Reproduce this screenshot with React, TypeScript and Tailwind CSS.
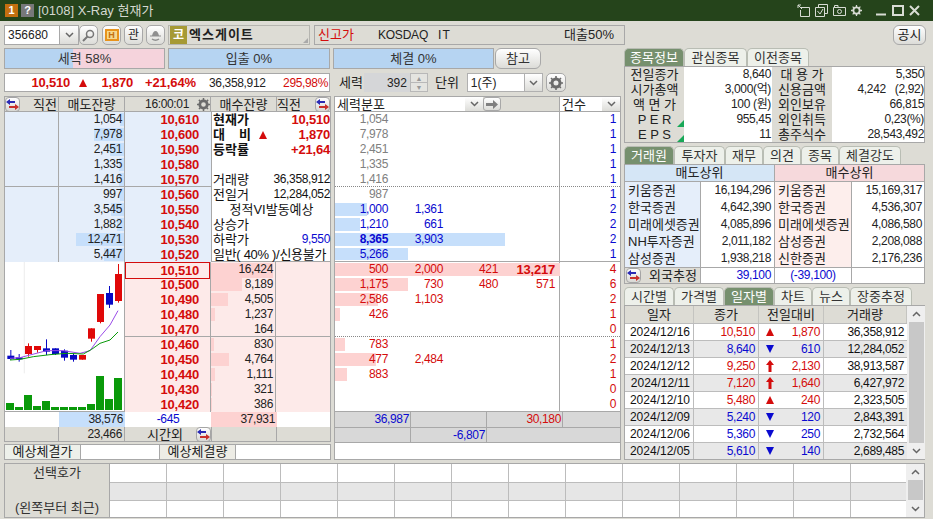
import { ReactNode } from "react";

const RED = "text-[#d40c0c]";
const BLUE = "text-[#0a0ad0]";
const ko = "text-[13px] leading-[15px]";
const num = "text-[12px] leading-[15px] tracking-[-0.35px]";
const bold = "text-[13px] leading-[15px] font-bold tracking-[-0.2px]";

const asks = [
  ["1,054", "10,610", 4],
  ["7,978", "10,600", 30],
  ["2,451", "10,590", 14],
  ["1,335", "10,580", 5],
  ["1,416", "10,570", 5],
  ["997", "10,560", 4],
  ["3,545", "10,550", 13],
  ["1,882", "10,540", 7],
  ["12,471", "10,530", 48],
  ["5,447", "10,520", 20],
] as const;

const bids = [
  ["10,510", "16,424", 62],
  ["10,500", "8,189", 31],
  ["10,490", "4,505", 17],
  ["10,480", "1,237", 4],
  ["10,470", "164", 0],
  ["10,460", "830", 3],
  ["10,450", "4,764", 18],
  ["10,440", "1,111", 4],
  ["10,430", "321", 1],
  ["10,420", "386", 1],
] as const;

const dist = [
  ["1,054", "", "", "", 0, "1", ""],
  ["7,978", "", "", "", 0, "1", ""],
  ["2,451", "", "", "", 0, "1", ""],
  ["1,335", "", "", "", 0, "1", ""],
  ["1,416", "", "", "", 0, "1", ""],
  ["987", "", "", "", 0, "1", ""],
  ["1,000", "1,361", "", "", 32, "2", ""],
  ["1,210", "661", "", "", 25, "2", ""],
  ["8,365", "3,903", "", "", 170, "2", "b"],
  ["5,266", "", "", "", 73, "1", ""],
  ["500", "2,000", "421", "13,217", 225, "4", ""],
  ["1,175", "730", "480", "571", 73, "6", ""],
  ["2,586", "1,103", "", "", 43, "2", ""],
  ["426", "", "", "", 5, "1", ""],
  ["", "", "", "", 0, "0", ""],
  ["783", "", "", "", 10, "1", ""],
  ["477", "2,484", "", "", 41, "2", ""],
  ["883", "", "", "", 12, "1", ""],
  ["", "", "", "", 0, "0", ""],
  ["", "", "", "", 0, "0", ""],
] as const;

const candles = [
  [32, 287, 297, 270, 300, 0],
  [57, 292, 298, 282, 305, 0],
  [85, 258, 282, 250, 290, 1],
  [112, 258, 270, 258, 278, 1],
  [139, 265, 275, 238, 285, 0],
  [166, 265, 282, 265, 285, 0],
  [193, 272, 293, 268, 302, 0],
  [220, 285, 299, 280, 305, 0],
  [247, 285, 299, 285, 299, 1],
  [274, 205, 236, 205, 245, 1],
  [301, 102, 186, 102, 190, 1],
  [328, 99, 134, 78, 144, 0],
  [355, 42, 123, 12, 128, 1],
];
const volumes = [429, 441, 405, 438, 423, 441, 441, 441, 441, 432, 348, 417, 354];

const daily = [
  ["2024/12/16", "10,510", "u", "1,870", "36,358,912"],
  ["2024/12/13", "8,640", "d", "610", "12,284,052"],
  ["2024/12/12", "9,250", "U", "2,130", "38,913,587"],
  ["2024/12/11", "7,120", "U", "1,640", "6,427,972"],
  ["2024/12/10", "5,480", "u", "240", "2,323,505"],
  ["2024/12/09", "5,240", "d", "120", "2,843,391"],
  ["2024/12/06", "5,360", "d", "250", "2,732,564"],
  ["2024/12/05", "5,610", "d", "140", "2,689,485"],
];

const brokers = [
  ["키움증권", "16,194,296", "키움증권", "15,169,317"],
  ["한국증권", "4,642,390", "한국증권", "4,536,307"],
  ["미래에셋증권", "4,085,896", "미래에셋증권", "4,086,580"],
  ["NH투자증권", "2,011,182", "삼성증권", "2,208,088"],
  ["삼성증권", "1,938,218", "신한증권", "2,176,236"],
];

const infoRows = [
  ["전일종가", "8,640", "대 용 가", "5,350"],
  ["시가총액", "3,000(억)", "신용금액", "4,242   (2,92)"],
  ["액 면 가", "100 (원)", "외인보유", "66,815"],
  ["P E R", "955,45", "외인취득", "0,23(%)"],
  ["E P S", "11", "총주식수", "28,543,492"],
];

function Swap() {
  return (
    <span className="flex h-[15px] w-[15px] shrink-0 items-center justify-center rounded-[4px] border border-[#a5a5a5] bg-gradient-to-b from-white to-[#d8d8d4]">
      <svg width="13" height="11" viewBox="0 0 13 11">
        <path d="M0 3 L4 0 V2 H9 V4 H4 V6 Z" fill="#2a2ab4" />
        <path d="M13 8 L9 5 V7 H3 V9 H9 V11 Z" fill="#c8302c" />
      </svg>
    </span>
  );
}

function Caret() {
  return (
    <svg width="9" height="6" viewBox="0 0 9 6">
      <path d="M1 1 L4.5 4.5 L8 1" fill="none" stroke="#666" strokeWidth="1.5" />
    </svg>
  );
}

function Gear({ size = 14 }: { size?: number }) {
  return (
    <svg width={size} height={size} viewBox="0 0 14 14">
      <circle cx="7" cy="7" r="4" fill="none" stroke="#6b6b6b" strokeWidth="3" />
      <path d="M7 0 V14 M0 7 H14 M2 2 L12 12 M12 2 L2 12" stroke="#6b6b6b" strokeWidth="1.6" strokeDasharray="2.4 9.2" />
    </svg>
  );
}

function Bevel({ className = "", children }: { className?: string; children?: ReactNode }) {
  return (
    <div className={`flex items-center justify-center rounded-[5px] border border-[#a8a8a8] bg-gradient-to-b from-white to-[#dcdcd8] ${className}`}>
      {children}
    </div>
  );
}

function Tab({ label, width, active }: { label: string; width: number; active?: boolean }) {
  return (
    <div
      style={{ width }}
      className={`flex h-[18px] items-center justify-center rounded-t-[5px] border border-b-0 border-[#b9bdb4] ${ko} ${
        active ? "bg-[#76906e] text-white" : "bg-[#edf0ea] text-[#333]"
      }`}
    >
      {label}
    </div>
  );
}

function TrendIcon({ kind }: { kind: string }) {
  if (kind === "d")
    return (
      <svg width="8" height="8" viewBox="0 0 8 8">
        <path d="M0 0 H8 L4 8 Z" fill="#0a0ad0" />
      </svg>
    );
  if (kind === "U")
    return (
      <svg width="8" height="12" viewBox="0 0 8 12">
        <path d="M4 0 L8 5 H5.5 V12 H2.5 V5 H0 Z" fill="#d40c0c" />
      </svg>
    );
  return (
    <svg width="8" height="8" viewBox="0 0 8 8">
      <path d="M4 0 L8 8 H0 Z" fill="#d40c0c" />
    </svg>
  );
}

function TitleBar() {
  return (
    <div className="flex h-[21px] shrink-0 items-center bg-[#25441b] pl-[5px] pr-[13px]">
      <span className="flex h-[13px] w-[13px] items-center justify-center bg-[#c46f10] text-[11px] font-bold text-white">1</span>
      <span className="ml-[3px] flex h-[13px] w-[13px] items-center justify-center bg-[#77787a] text-[11px] font-bold text-white">?</span>
      <span className="ml-[4px] text-[13px] text-[#d4d8d0]">[0108] X-Ray 현재가</span>
      <div className="ml-auto flex items-center gap-[5px]">
        <svg width="13" height="13" viewBox="0 0 13 13" fill="none" stroke="#d8dcd4">
          <path d="M3.5 3.5 H12.5 V12.5 H3.5 V6 M1 1 L5 5 M1 1 H4 M1 1 V4" />
        </svg>
        <svg width="13" height="13" viewBox="0 0 13 13" fill="none" stroke="#d8dcd4">
          <path d="M3.5 3 V0.5 H12.5 V9.5 H10 M0.5 3.5 H9.5 V12.5 H0.5 Z M2.5 7 L5 10 L8 5" />
        </svg>
        <svg width="13" height="13" viewBox="0 0 13 13" fill="none" stroke="#d8dcd4">
          <path d="M0.5 3.5 H12.5 V11.5 H0.5 Z M1.5 3.5 V1.5 H5 V3.5" />
          <circle cx="6.5" cy="7.5" r="2" />
        </svg>
        <svg width="11" height="11" viewBox="0 0 14 14">
          <circle cx="7" cy="7" r="4" fill="none" stroke="#d8dcd4" strokeWidth="2.4" />
          <path d="M7 0 V14 M0 7 H14 M2 2 L12 12 M12 2 L2 12" stroke="#d8dcd4" strokeWidth="1.6" strokeDasharray="2.4 9.2" />
        </svg>
        <svg className="ml-[9px]" width="11" height="11" viewBox="0 0 11 11">
          <path d="M0 9.5 H10" stroke="#d8dcd4" strokeWidth="2" />
        </svg>
        <svg width="12" height="11" viewBox="0 0 12 11" fill="none" stroke="#d8dcd4" strokeWidth="2">
          <path d="M1 1 H11 V10 H1 Z" />
        </svg>
        <svg width="11" height="11" viewBox="0 0 11 11" stroke="#d8dcd4" strokeWidth="2">
          <path d="M1 1 L10 10 M10 1 L1 10" />
        </svg>
      </div>
    </div>
  );
}

function Toolbar() {
  return (
    <div className="flex h-[20px] items-stretch">
      <div className="flex w-[56px] items-center border border-[#a8a8a8] bg-white pl-[3px] text-[12px]">356680</div>
      <div className="flex w-[19px] items-center justify-center border-y border-r border-[#a8a8a8] bg-gradient-to-b from-white to-[#dcdcd8]">
        <Caret />
      </div>
      <Bevel className="w-[19px]">
        <svg width="13" height="13" viewBox="0 0 13 13" fill="none" stroke="#777" strokeWidth="1.5">
          <circle cx="8" cy="5" r="3.5" />
          <path d="M5.5 7.5 L1 12" strokeWidth="2" />
        </svg>
      </Bevel>
      <Bevel className="ml-[4px] w-[19px]">
        <span className="flex h-[12px] w-[14px] items-center justify-center border-2 border-[#e8931c] bg-[#f6d88e] text-[9px] leading-none font-bold text-[#c46f10]">H</span>
      </Bevel>
      <Bevel className="ml-[3px] w-[19px] text-[12px]">관</Bevel>
      <Bevel className="ml-[3px] w-[19px]">
        <svg width="13" height="13" viewBox="0 0 13 13">
          <path d="M3 7 Q4 2 6.5 2 Q9 2 10 7 Z" fill="#8f8f8f" />
          <path d="M1 7 H12" stroke="#8f8f8f" />
          <path d="M3 10 Q6.5 12.5 10 10" fill="none" stroke="#8f8f8f" strokeWidth="1.5" />
        </svg>
      </Bevel>
      <div className="relative ml-[3px] flex w-[142px] items-center border border-[#b5b5b0] pl-[1px]">
        <span className="flex h-[18px] w-[17px] items-center justify-center bg-[#a69a35] text-[12px] font-bold text-white">코</span>
        <span className="ml-[2px] text-[13px] font-bold tracking-[1px]">엑스게이트</span>
        <svg className="absolute right-[1px] bottom-[1px]" width="5" height="5" viewBox="0 0 5 5">
          <path d="M5 0 V5 H0 Z" fill="#aaa" />
        </svg>
      </div>
      <div className="ml-[4px] flex w-[311px] items-center border border-[#a8a8a8] pl-[3px] pr-[10px] text-[13px]">
        <span className={RED}>신고가</span>
        <span className="ml-[24px] text-[12px] tracking-[-0.2px]">KOSDAQ</span>
        <span className="ml-[10px] text-[12px] tracking-[1px]">IT</span>
        <span className="ml-auto">대출50%</span>
      </div>
      <Bevel className="ml-[268px] w-[33px] rounded-[6px] text-[13px]">공시</Bevel>
    </div>
  );
}

function PowerBars() {
  return (
    <div className="mt-[3px] flex h-[21px] items-stretch text-[13px] text-[#333]">
      <div className="relative flex w-[161px] items-center justify-center border border-[#a8a8a8] bg-[#f5d3dc]">
        <div className="absolute inset-y-0 left-0 w-[68px] bg-[#b6d4f2]" />
        <span className="relative">세력 58%</span>
      </div>
      <div className="ml-[3px] flex w-[162px] items-center justify-center border border-[#a8a8a8] bg-[#b6d4f2]">입출 0%</div>
      <div className="ml-[3px] flex w-[161px] items-center justify-center border border-[#a8a8a8] bg-[#b6d4f2]">체결 0%</div>
      <Bevel className="ml-[1px] w-[46px] rounded-[6px] text-[13px]">참고</Bevel>
    </div>
  );
}

function QuoteLine() {
  return (
    <div className="mt-[4px] flex h-[19px] items-center whitespace-nowrap">
      <div className="flex h-full w-[326px] shrink-0 items-center border border-[#a8a8a8] bg-white pr-[1px]">
        <span className={`ml-[26px] w-[39px] text-right text-[13px] font-bold tracking-[-0.2px] ${RED}`}>10,510</span>
        <span className="ml-[9px]">
          <TrendIcon kind="u" />
        </span>
        <span className={`ml-[14px] w-[32px] text-right text-[13px] font-bold tracking-[-0.2px] ${RED}`}>1,870</span>
        <span className={`ml-[12px] text-[13px] font-bold tracking-[-0.1px] ${RED}`}>+21,64%</span>
        <span className="ml-[13px] text-[12px] tracking-[-0.35px]">36,358,912</span>
        <span className={`ml-auto text-[12px] tracking-[-0.35px] ${RED}`}>295,98%</span>
      </div>
      <span className="ml-[9px] shrink-0 text-[13px]">세력</span>
      <div className="ml-[1px] flex h-full w-[64px] shrink-0 items-stretch">
        <div className="flex w-[46px] items-center justify-end bg-[#d5d6d8] pr-[3px] text-[12px]">392</div>
        <div className="flex w-[18px] flex-col border border-[#b8b8b8] bg-[#e4e4e0]">
          <span className="flex h-[8px] flex-1 items-center justify-center overflow-hidden text-[7px] leading-none text-[#999]">▲</span>
          <span className="flex h-[8px] flex-1 items-center justify-center overflow-hidden border-t border-[#b8b8b8] text-[7px] leading-none text-[#999]">▼</span>
        </div>
      </div>
      <span className="ml-[7px] shrink-0 text-[13px]">단위</span>
      <div className="ml-[8px] flex h-full w-[76px] shrink-0 items-stretch border border-[#b0b0b0] bg-white">
        <span className="flex flex-1 items-center pl-[3px] text-[12px]">1(주)</span>
        <span className="flex w-[18px] items-center justify-center border-l border-[#b0b0b0] bg-gradient-to-b from-white to-[#dcdcd8]">
          <Caret />
        </span>
      </div>
      <Bevel className="ml-[3px] h-full w-[20px] shrink-0">
        <Gear />
      </Bevel>
    </div>
  );
}

function LeftTable() {
  const head = `flex h-[15px] items-center justify-center whitespace-nowrap border-b border-r border-[#a8a8a8] bg-[#dddcd5] ${ko}`;
  return (
    <div className="w-[327px] border-x border-t border-[#a8a8a8] bg-white">
      <div className="grid grid-cols-[54px_66px_86px_66px_53px]">
        <div className={`${head} justify-start gap-[13px]`}>
          <Swap />
          <span>직전</span>
        </div>
        <div className={head}>매도잔량</div>
        <div className={`${head} justify-end gap-[8px]`}>
          <span className={num}>16:00:01</span>
          <Gear size={13} />
        </div>
        <div className={head}>매수잔량</div>
        <div className={`${head} justify-end gap-[14px] border-r-0`}>
          <span>직전</span>
          <Swap />
        </div>
      </div>
      <div className="flex h-[150px] border-b border-[#a8a8a8]">
        <div className="w-[206px] shrink-0">
          {asks.map(([qty, price, bar], i) => (
            <div key={price} className={`grid h-[15px] grid-cols-[54px_66px_86px] bg-[#e5eefa] ${i === 4 ? "border-b border-[#a8a8a8]" : ""}`}>
              <div className="border-r border-[#a8a8a8]" />
              <div className={`relative border-r border-[#a8a8a8] pr-[2px] text-right ${num} text-[#222]`}>
                <div className="absolute inset-y-[1px] right-0 bg-[#c6dffb]" style={{ width: bar }} />
                <span className="relative">{qty}</span>
              </div>
              <div className={`pr-[12px] text-right ${bold} ${RED}`}>{price}</div>
            </div>
          ))}
        </div>
        <div className={`flex-1 border-l border-[#a8a8a8] pl-[1px] ${num} text-[#111]`}>
          <div className="flex h-[15px] justify-between">
            <span className="text-[13px] font-bold tracking-normal">현재가</span>
            <span className={`${bold} ${RED}`}>10,510</span>
          </div>
          <div className="flex h-[15px] items-center">
            <span className="flex w-[38px] justify-between text-[13px] font-bold tracking-normal">
              <span>대</span>
              <span>비</span>
            </span>
            <span className="ml-[8px]">
              <TrendIcon kind="u" />
            </span>
            <span className={`ml-auto ${bold} ${RED}`}>1,870</span>
          </div>
          <div className="flex h-[15px] justify-between">
            <span className="text-[13px] font-bold tracking-normal">등락률</span>
            <span className={`${bold} ${RED}`}>+21,64</span>
          </div>
          <div className="h-[15px]" />
          <div className="flex h-[15px] justify-between">
            <span className="text-[13px] tracking-normal">거래량</span>
            <span>36,358,912</span>
          </div>
          <div className="flex h-[15px] justify-between">
            <span className="text-[13px] tracking-normal">전일거</span>
            <span>12,284,052</span>
          </div>
          <div className="h-[15px] text-center text-[13px] tracking-normal">정적VI발동예상</div>
          <div className="h-[15px] text-[13px] tracking-normal">상승가</div>
          <div className="flex h-[15px] justify-between">
            <span className="text-[13px] tracking-normal">하락가</span>
            <span className={BLUE}>9,550</span>
          </div>
          <div className="h-[15px] whitespace-nowrap text-[13px] tracking-[-0.3px]">일반( 40% )/신용불가</div>
        </div>
      </div>
      <div className="flex h-[150px] border-b border-[#a8a8a8]">
        <div className="h-full w-[120px] shrink-0 border-r border-[#a8a8a8] bg-white">
          <svg width="119" height="149" viewBox="15 6 357 447">
            <path d="M73 6 V340" stroke="#e4e4e4" strokeWidth="2" />
            {volumes.map((top, i) => (
              <rect key={i} x={18 + i * 27} y={top} width="24" height={450 - top} fill="#0a9a0a" />
            ))}
            {candles.map(([x, t, b, wt, wb, up], i) => (
              <g key={i} fill={up ? "#e00808" : "#0808c4"}>
                <rect x={x - 1} y={wt} width="3" height={wb - wt} />
                <rect x={x - 10} y={t} width="21" height={b - t} />
              </g>
            ))}
            <polyline points="30,295 60,293 90,285 140,272 190,272 240,280 270,272 300,230 330,195 354,152" fill="none" stroke="#9a4be8" strokeWidth="3" />
            <polyline points="30,300 60,298 100,290 150,284 200,280 250,282 275,268 300,250 330,240 354,216" fill="none" stroke="#0a9a0a" strokeWidth="3" />
          </svg>
        </div>
        <div className="flex-1">
          {bids.map(([price, qty, bar], i) => (
            <div key={price} className={`grid h-[15px] grid-cols-[85px_66px_1fr] bg-[#fdeae9] ${i === 4 ? "border-b border-[#a8a8a8]" : ""}`}>
              <div className={`text-right ${bold} ${RED} ${i === 0 ? "border border-[#d40c0c] pr-[10px] leading-[13px]" : "pr-[11px]"}`}>{price}</div>
              <div className={`relative border-x border-[#a8a8a8] pr-[2px] text-right ${num} text-[#222]`}>
                <div className="absolute inset-y-[1px] left-0 bg-[#fdd2d1]" style={{ width: bar }} />
                <span className="relative">{qty}</span>
              </div>
              <div />
            </div>
          ))}
        </div>
      </div>
      <div className={`grid h-[15px] grid-cols-[54px_66px_86px_66px_53px] ${num}`}>
        <div />
        <div className="bg-[#c6dffb] pr-[2px] text-right">38,576</div>
        <div className={`text-center ${BLUE}`}>-645</div>
        <div className="bg-[#fdd2d1] pr-[2px] text-right">37,931</div>
        <div />
      </div>
      <div className={`grid h-[15px] grid-cols-[54px_66px_86px_66px_53px] border-b border-[#a8a8a8] bg-[#dddcd5] ${num}`}>
        <div className="border-r border-[#a8a8a8]" />
        <div className="border-r border-[#a8a8a8] pr-[2px] text-right">23,466</div>
        <div className="flex items-center justify-end gap-[13px]">
          <span className="text-[13px] tracking-normal">시간외</span>
          <Swap />
        </div>
        <div className="border-x border-[#a8a8a8]" />
        <div />
      </div>
    </div>
  );
}

function MiddleTable() {
  return (
    <div className="flex w-[287px] flex-col border border-[#a8a8a8] bg-white">
      <div className={`flex h-[15px] border-b border-[#a8a8a8] ${ko}`}>
        <div className="flex w-[225px] items-stretch border-r border-[#a8a8a8] bg-[#dddcd5]">
          <span className="w-[130px] bg-white pl-[2px] text-[13px]">세력분포</span>
          <span className="flex w-[18px] items-center justify-center bg-gradient-to-b from-white to-[#dcdcd8]">
            <Caret />
          </span>
          <span className="flex w-[18px] items-center justify-center rounded-[3px] border border-[#a8a8a8] bg-gradient-to-b from-white to-[#dcdcd8]">
            <svg width="12" height="9" viewBox="0 0 12 9">
              <path d="M0 3 H7 V0 L12 4.5 L7 9 V6 H0 Z" fill="#808080" />
            </svg>
          </span>
        </div>
        <div className="flex flex-1 items-stretch">
          <span className="flex-1 bg-white pl-[2px]">건수</span>
          <span className="flex w-[18px] items-center justify-center bg-gradient-to-b from-white to-[#dcdcd8]">
            <Caret />
          </span>
        </div>
      </div>
      {dist.map(([a, b, c, d, bar, cnt, bf], i) => {
        const color = i < 6 ? "text-[#808080]" : i < 10 ? BLUE : RED;
        const barColor = i < 10 ? "bg-[#c6dffb]" : "bg-[#fdd2d1]";
        const countColor = i < 10 ? BLUE : RED;
        const edge = i === 4 || i === 14 ? "border-b border-dotted border-[#888]" : i === 9 || i === 19 ? "border-b border-[#a8a8a8]" : "";
        return (
          <div key={i} className={`flex h-[15px] ${edge} ${num}`}>
            <div className={`relative grid w-[225px] grid-cols-[53px_55px_55px_57px_5px] border-r border-[#a8a8a8] text-right ${color}`}>
              <div className={`absolute inset-y-[1px] left-0 ${barColor}`} style={{ width: bar }} />
              <span className={`relative ${bf ? "font-bold" : ""}`}>{a}</span>
              <span className="relative">{b}</span>
              <span className="relative">{c}</span>
              <span className={`relative ${i === 10 ? bold : ""}`}>{d}</span>
            </div>
            <div className={`flex-1 pr-[4px] text-right ${countColor}`}>{cnt}</div>
          </div>
        );
      })}
      <div className={`flex h-[15px] bg-[#d8d8d8] ${num}`}>
        <div className={`w-[76px] border-r border-[#a8a8a8] pr-[1px] text-right ${BLUE}`}>36,987</div>
        <div className="w-[76px] border-r border-[#a8a8a8]" />
        <div className={`w-[76px] border-r border-[#a8a8a8] pr-[1px] text-right ${RED}`}>30,180</div>
      </div>
      <div className={`flex h-[15px] border-t border-[#a8a8a8] bg-[#d8d8d8] ${num}`}>
        <div className="w-[76px] border-r border-[#a8a8a8]" />
        <div className={`w-[76px] border-r border-[#a8a8a8] pr-[1px] text-right ${BLUE}`}>-6,807</div>
      </div>
      <div className="flex-1 border-t border-[#a8a8a8]" />
    </div>
  );
}

function InfoPanel() {
  return (
    <div className={`border border-[#a8a8a8] ${num}`}>
      {infoRows.map(([l1, v1, l2, v2], i) => (
        <div key={l1} className="grid h-[15px] grid-cols-[59px_88px_60px_92px] text-[#222]">
          <div className="relative whitespace-pre text-center text-[13px] tracking-normal">
            {l1}
            {i > 2 && (
              <svg className="absolute right-0 bottom-0" width="7" height="7" viewBox="0 0 7 7">
                <path d="M7 0 V7 H0 Z" fill="#18a858" />
              </svg>
            )}
          </div>
          <div className="whitespace-pre bg-white pr-[1px] text-right">{v1}</div>
          <div className="whitespace-pre text-center text-[13px] tracking-normal">{l2}</div>
          <div className="whitespace-pre bg-white text-right">{v2}</div>
        </div>
      ))}
    </div>
  );
}

function BrokerPanel() {
  const row = "grid h-[17px] grid-cols-[76px_74px_77px_73px] leading-[17px]";
  return (
    <div className="border border-[#a8a8a8] bg-white text-[#222]">
      <div className="grid h-[17px] grid-cols-[150px_1fr] border-b border-[#a8a8a8] text-center text-[13px] leading-[16px]">
        <div className="border-r border-[#a8a8a8] bg-[#d5e6f6]">매도상위</div>
        <div className="bg-[#f6d9dc]">매수상위</div>
      </div>
      {brokers.map(([a, b, c, d]) => (
        <div key={a + c} className={row}>
          <div className="whitespace-nowrap border-r border-[#a8a8a8] bg-[#e5eefa] pl-[3px] text-[13px]">{a}</div>
          <div className="border-r border-[#a8a8a8] pr-[3px] text-right text-[12px] tracking-[-0.35px]">{b}</div>
          <div className="whitespace-nowrap border-r border-[#a8a8a8] bg-[#fdeeec] pl-[3px] text-[13px]">{c}</div>
          <div className="pr-[3px] text-right text-[12px] tracking-[-0.35px]">{d}</div>
        </div>
      ))}
      <div className="grid h-[16px] grid-cols-[76px_74px_77px_73px] border-t border-[#a8a8a8] leading-[15px]">
        <div className="flex items-center gap-[8px] border-r border-[#a8a8a8] bg-[#dddcd5] pl-[1px] text-[13px]">
          <Swap />
          외국추정
        </div>
        <div className={`border-r border-[#a8a8a8] pr-[3px] text-right text-[12px] tracking-[-0.35px] ${BLUE}`}>39,100</div>
        <div className={`border-r border-[#a8a8a8] text-center text-[12px] tracking-[-0.35px] ${BLUE}`}>(-39,100)</div>
        <div />
      </div>
    </div>
  );
}

function ScrollBar({ thumb }: { thumb: string }) {
  return (
    <div className="flex w-[18px] shrink-0 flex-col items-center bg-[#efefef]">
      <span className="flex h-[16px] items-center justify-center">
        <svg width="9" height="6" viewBox="0 0 9 6">
          <path d="M1 5 L4.5 1.5 L8 5" fill="none" stroke="#666" strokeWidth="1.5" />
        </svg>
      </span>
      <div className={`w-[15px] bg-[#c8c8c8] ${thumb}`} />
      <span className="mt-auto flex h-[16px] items-center justify-center">
        <Caret />
      </span>
    </div>
  );
}

function DailyPanel() {
  const cols = "grid grid-cols-[69px_65px_65px_83px]";
  return (
    <div className="flex border border-[#a8a8a8] bg-white">
      <div className="flex-1">
        <div className={`${cols} h-[17px] bg-[#dddcd5] text-center text-[13px] leading-[17px]`}>
          {["일자", "종가", "전일대비", "거래량"].map((h) => (
            <div key={h} className="border-r border-[#c4c4c0]">{h}</div>
          ))}
        </div>
        {daily.map(([date, close, dir, diff, vol], i) => {
          const c = dir === "d" ? BLUE : RED;
          return (
            <div key={date} className={`${cols} h-[17px] border-t border-[#bcbcbc] text-[12px] leading-[16px] tracking-[-0.35px] ${i % 2 ? "bg-[#e8e8e8]" : "bg-white"}`}>
              <div className="border-r border-[#bcbcbc] pr-[3px] text-right tracking-normal text-[#111]">{date}</div>
              <div className={`border-r border-[#bcbcbc] pr-[3px] text-right ${c}`}>{close}</div>
              <div className={`flex items-center justify-between border-r border-[#bcbcbc] pl-[7px] pr-[3px] ${c}`}>
                <TrendIcon kind={dir} />
                <span>{diff}</span>
              </div>
              <div className="pr-[3px] text-right text-[#111]">{vol}</div>
            </div>
          );
        })}
      </div>
      <ScrollBar thumb="h-[121px]" />
    </div>
  );
}

function RightColumn() {
  return (
    <div className="w-[301px]">
      <div className="mt-[3px] flex">
        <Tab label="종목정보" width={60} active />
        <Tab label="관심종목" width={63} />
        <Tab label="이전종목" width={62} />
      </div>
      <InfoPanel />
      <div className="mt-[3px] flex">
        <Tab label="거래원" width={50} active />
        <Tab label="투자자" width={51} />
        <Tab label="재무" width={38} />
        <Tab label="의견" width={38} />
        <Tab label="종목" width={38} />
        <Tab label="체결강도" width={62} />
      </div>
      <BrokerPanel />
      <div className="mt-[3px] flex">
        <Tab label="시간별" width={50} />
        <Tab label="가격별" width={50} />
        <Tab label="일자별" width={50} active />
        <Tab label="차트" width={38} />
        <Tab label="뉴스" width={38} />
        <Tab label="장중추정" width={62} />
      </div>
      <DailyPanel />
    </div>
  );
}

function ExpectRow() {
  return (
    <div className="mt-[2px] flex h-[16px] w-[327px] border border-[#a8a8a8] text-[13px] leading-[14px]">
      <div className="w-[75px] bg-[#edf0ea] text-center">예상체결가</div>
      <div className="w-[80px] border-x border-[#a8a8a8] bg-white" />
      <div className="w-[75px] bg-[#edece5] text-center">예상체결량</div>
      <div className="flex-1 border-l border-[#a8a8a8] bg-white" />
    </div>
  );
}

function BottomTable() {
  const cells = Array.from({ length: 14 });
  return (
    <div className="mt-[3px] flex h-[55px] w-[921px] border border-[#a8a8a8] bg-white">
      <div className="flex w-[105px] shrink-0 flex-col items-center justify-between border-r border-[#a8a8a8] bg-[#dddcd5] text-[13px] leading-[18px] text-[#333]">
        <span>선택호가</span>
        <span>(왼쪽부터 최근)</span>
      </div>
      <div className="flex-1 overflow-hidden">
        {[0, 1, 2].map((r) => (
          <div key={r} className={`grid h-[18px] grid-cols-[repeat(14,57px)] ${r === 1 ? "bg-[#e6e6e6]" : ""} ${r > 0 ? "border-t border-[#bcbcbc]" : ""}`}>
            {cells.map((_, i) => (
              <div key={i} className="border-r border-[#bcbcbc]" />
            ))}
          </div>
        ))}
      </div>
      <ScrollBar thumb="h-[20px]" />
    </div>
  );
}

export default function App() {
  return (
    <div className="flex h-[519px] w-[933px] flex-col overflow-hidden bg-[#dddcd5] font-['Liberation_Sans','Noto_Sans_CJK_KR',sans-serif] text-[#222]">
      <TitleBar />
      <div className="flex-1 pl-[4px] pt-[4px]">
        <Toolbar />
        <div className="flex">
          <div className="w-[620px] shrink-0">
            <div className="w-[565px]">
              <PowerBars />
              <QuoteLine />
            </div>
            <div className="mt-[4px] flex gap-[3px]">
              <div>
                <LeftTable />
                <ExpectRow />
              </div>
              <div className="flex">
                <MiddleTable />
              </div>
            </div>
          </div>
          <RightColumn />
        </div>
        <BottomTable />
      </div>
    </div>
  );
}
